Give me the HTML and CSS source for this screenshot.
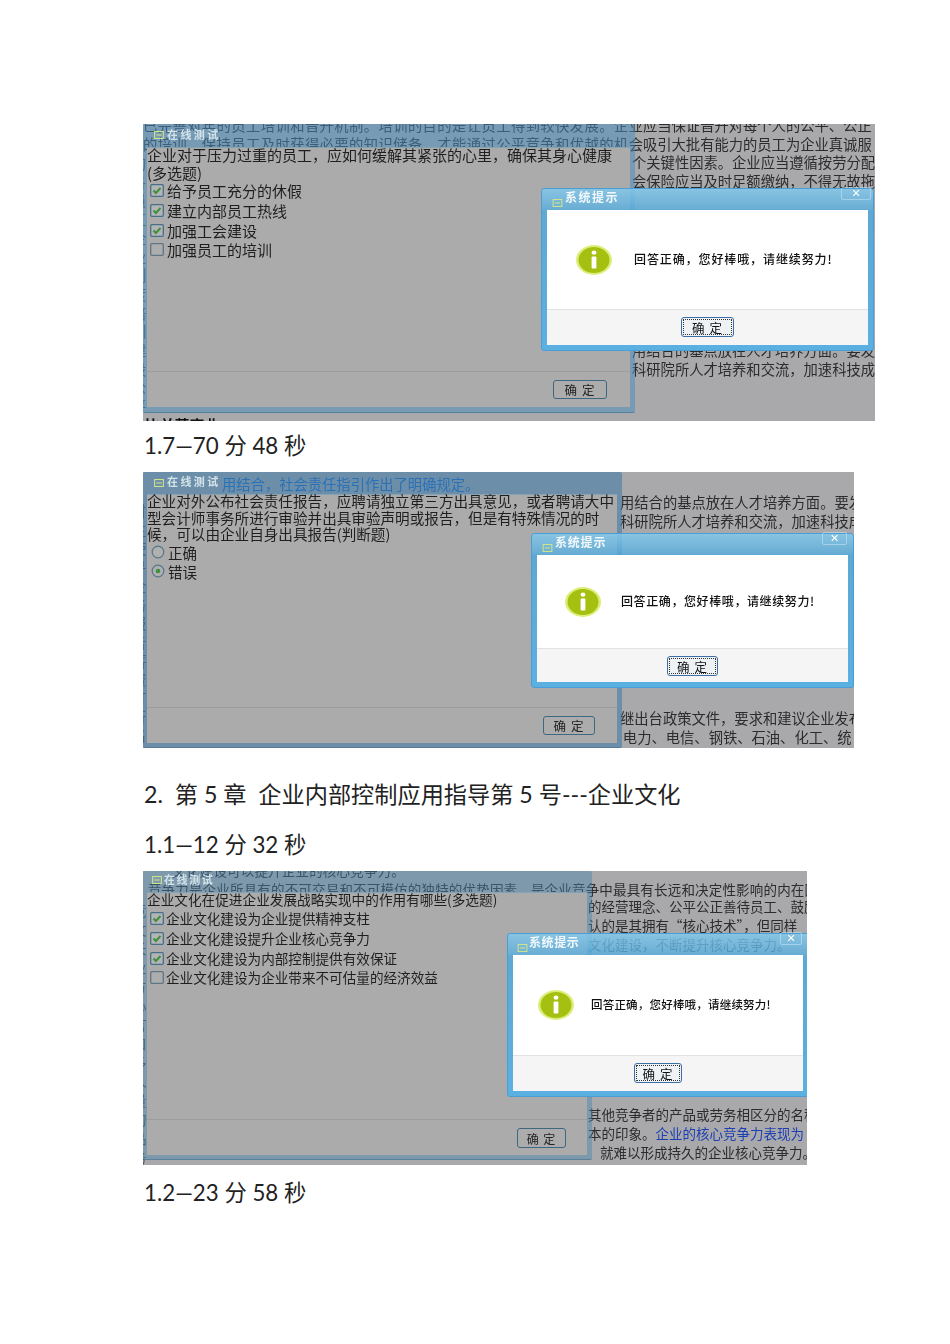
FILE: index.html
```html
<!DOCTYPE html>
<html lang="zh-CN">
<head>
<meta charset="utf-8">
<title>在线测试</title>
<link rel="stylesheet" href="styles.css">
</head>
<body>
<svg class="defs" aria-hidden="true">
  <symbol id="tbar" viewBox="0 0 11 9"><rect x=".6" y=".6" width="9.8" height="7.8" fill="none" stroke="currentColor" stroke-width="1.2"/><path d="M2.5 4.5h6" stroke="currentColor" stroke-width="1.2"/></symbol>
  <symbol id="info" viewBox="0 0 36 30"><ellipse cx="18" cy="15" rx="18" ry="15" fill="#dcee78"/><ellipse cx="18" cy="15" rx="15.5" ry="13" fill="#a6c012"/><ellipse cx="18" cy="7.6" rx="2.4" ry="2.2" fill="#fff"/><rect x="15.6" y="11.4" width="4.8" height="12" rx="1" fill="#fff"/></symbol>
  <symbol id="on" viewBox="0 0 14 13"><rect x=".7" y=".7" width="12.6" height="11.6" rx="1" fill="#b4b4b4" stroke="#47708a" stroke-width="1.3"/><path d="M3.5 6.5l2.4 2.5 4.6-5" fill="none" stroke="#3f8f3c" stroke-width="1.9"/></symbol>
  <symbol id="off" viewBox="0 0 14 13"><rect x=".7" y=".7" width="12.6" height="11.6" rx="1" fill="#adadad" stroke="#5f7686" stroke-width="1.3"/></symbol>
  <symbol id="r-off" viewBox="0 0 14 14"><circle cx="7" cy="7" r="5.8" fill="#b0b0b0" stroke="#54768c" stroke-width="1.2"/></symbol>
  <symbol id="r-on" viewBox="0 0 14 14"><circle cx="7" cy="7" r="5.8" fill="#b0b0b0" stroke="#54768c" stroke-width="1.2"/><circle cx="7" cy="7" r="2.3" fill="#3f8f3c"/></symbol>
</svg>

<main class="doc">
  <section class="shot shot1">
    <div class="back back-top"><span class="wide">已完善对年的员工培训和晋升机制。培训的目的是让员工得到较快发展。企</span>业应当保证晋升对每个人的公平、公正<br><span class="wide">的培训，保持员工及时获得必要的知识储备，才能通过公平竞争和优越的机</span>会吸引大批有能力的员工为企业真诚服</div>
    <div class="back back-r1">个关键性因素。企业应当遵循按劳分配<br>会保险应当及时足额缴纳，不得无故拖</div>
    <div class="back back-r2">用结合的基点放在人才培养方面。要发<br>科研院所人才培养和交流，加速科技成</div>
    <div class="back edge">的<br>各<br>员<br>工<br>企<br>业<br>制<br>度<br>培<br>训<br>建<br>设<br>公<br>平</div>
    <div class="cut">比并荐商业</div>
    <div class="window">
      <div class="win-title"><svg class="tbar-icon"><use href="#tbar"/></svg><span>在线测试</span></div>
      <div class="win-body">
        <div class="content">
          <p class="question">企业对于压力过重的员工，应如何缓解其紧张的心里，确保其身心健康<br>(多选题)</p>
          <ul class="options">
            <li><svg class="box"><use href="#on"/></svg>给予员工充分的休假</li>
            <li><svg class="box"><use href="#on"/></svg>建立内部员工热线</li>
            <li><svg class="box"><use href="#on"/></svg>加强工会建设</li>
            <li><svg class="box"><use href="#off"/></svg>加强员工的培训</li>
          </ul>
        </div>
        <div class="win-foot"><span class="win-btn">确 定</span></div>
      </div>
    </div>
    <div class="dialog">
      <div class="dlg-title"><svg class="tbar-icon"><use href="#tbar"/></svg><span>系统提示</span></div>
      <span class="close">✕</span>
      <div class="dlg-body">
        <div class="msg"><svg class="info"><use href="#info"/></svg><span>回答正确，您好棒哦，请继续努力!</span></div>
        <div class="dlg-foot"><span class="dlg-btn">确 定</span></div>
      </div>
    </div>
  </section>
  <p class="caption">1.7—70 分 48 秒</p>

  <section class="shot shot2">
    <div class="back back-top blue">用结合，社会责任指引作出了明确规定。</div>
    <div class="back back-r1">用结合的基点放在人才培养方面。要发<br>科研院所人才培养和交流，加速科技成</div>
    <div class="back back-r2">继出台政策文件，要求和建议企业发布<br>&thinsp;电力、电信、钢铁、石油、化工、统</div>
    <div class="back edge">财<br>主<br>使<br>寻<br>企<br>务<br>报<br>告<br>薪<br>资<br>订<br>行<br>名<br>出</div>
    <div class="window">
      <div class="win-title"><svg class="tbar-icon"><use href="#tbar"/></svg><span>在线测试</span></div>
      <div class="win-body">
        <div class="content">
          <p class="question">企业对外公布社会责任报告，应聘请独立第三方出具意见，或者聘请大中<br>型会计师事务所进行审验并出具审验声明或报告，但是有特殊情况的时<br>候，可以由企业自身出具报告(判断题)</p>
          <ul class="options">
            <li><svg class="box"><use href="#r-off"/></svg>正确</li>
            <li><svg class="box"><use href="#r-on"/></svg>错误</li>
          </ul>
        </div>
        <div class="win-foot"><span class="win-btn">确 定</span></div>
      </div>
    </div>
    <div class="dialog">
      <div class="dlg-title"><svg class="tbar-icon"><use href="#tbar"/></svg><span>系统提示</span></div>
      <span class="close">✕</span>
      <div class="dlg-body">
        <div class="msg"><svg class="info"><use href="#info"/></svg><span>回答正确，您好棒哦，请继续努力!</span></div>
        <div class="dlg-foot"><span class="dlg-btn">确 定</span></div>
      </div>
    </div>
  </section>
  <h2 class="chapter">2.&nbsp; 第 5 章&nbsp; 企业内部控制应用指导第 5 号---企业文化</h2>
  <p class="caption">1.1—12 分 32 秒</p>

  <section class="shot shot3">
    <div class="back back-top">&emsp;&emsp;文化建设可以提升企业的核心竞争力。<br>&thinsp;竞争力是企业所具有的不可交易和不可模仿的独特的优势因素，是企业竞争中最具有长远和决定性影响的内在因</div>
    <div class="back back-r1">的经营理念、公平公正善待员工、鼓励<br>认的是其拥有“核心技术”，但同样<br>文化建设，不断提升核心竞争力。</div>
    <div class="back back-r2">其他竞争者的产品或劳务相区分的名称<br>本的印象。<span class="blue-in">企业的核心竞争力表现为</span><br><span class="indent">就难以形成持久的企业核心竞争力。</span></div>
    <div class="back edge">竞<br>文<br>长<br>业<br>方<br>心<br>言<br>口<br>多<br>入<br>量<br>的<br>品<br>务</div>
    <div class="window">
      <div class="win-title"><svg class="tbar-icon"><use href="#tbar"/></svg><span>在线测试</span></div>
      <div class="win-body">
        <div class="content">
          <p class="question">企业文化在促进企业发展战略实现中的作用有哪些(多选题)</p>
          <ul class="options">
            <li><svg class="box"><use href="#on"/></svg>企业文化建设为企业提供精神支柱</li>
            <li><svg class="box"><use href="#on"/></svg>企业文化建设提升企业核心竞争力</li>
            <li><svg class="box"><use href="#on"/></svg>企业文化建设为内部控制提供有效保证</li>
            <li><svg class="box"><use href="#off"/></svg>企业文化建设为企业带来不可估量的经济效益</li>
          </ul>
        </div>
        <div class="win-foot"><span class="win-btn">确 定</span></div>
      </div>
    </div>
    <div class="dialog">
      <div class="dlg-title"><svg class="tbar-icon"><use href="#tbar"/></svg><span>系统提示</span></div>
      <span class="close">✕</span>
      <div class="dlg-body">
        <div class="msg"><svg class="info"><use href="#info"/></svg><span>回答正确，您好棒哦，请继续努力!</span></div>
        <div class="dlg-foot"><span class="dlg-btn">确 定</span></div>
      </div>
    </div>
  </section>
  <p class="caption cap-c">1.2—23 分 58 秒</p>
</main>
</body>
</html>
```
FILE: styles.css
```css
* { box-sizing: border-box; }
html, body { margin: 0; padding: 0; background: #fff; }
.defs { width: 0; height: 0; position: absolute; }
.doc {
  min-height: 1344px;
  padding: 124px 0 0 143px;
  font-family: "Lato", "Noto Sans CJK SC", sans-serif;
  color: #222;
  overflow: hidden;
}
.caption, .chapter {
  margin: 0;
  padding-left: 1px;
  font-size: 22.3px;
  font-weight: 400;
  white-space: nowrap;
  display: flex;
  align-items: center;
}
.caption { height: 51px; padding-bottom: 5px; }
.cap-c { height: 56px; }
.chapter { height: 72px; padding-top: 18px; font-size: 23.2px; }

/* screenshot canvases */
.shot {
  position: relative;
  overflow: hidden;
  background: #a9a9ab;
  font-family: "Noto Sans CJK SC", "Noto Sans", sans-serif;
  filter: blur(.45px);
}
.shot1 { width: 732px; height: 297px; }
.shot2 { width: 711px; height: 276px; }
.shot3 { width: 664px; height: 294px; }

.back {
  position: absolute;
  white-space: nowrap;
  color: #2c2c2e;
  font-size: 14.3px;
  line-height: 18.7px;
}
.wide { letter-spacing: .42px; }
.blue { color: #0f66cc; font-size: 14.3px; }
.blue-in { color: #1c3fb4; }
.indent { padding-left: 12px; }
.edge { left: -11px; top: 30px; color: #3a5468; }
.cut {
  position: absolute;
  left: 2px;
  top: 292px;
  font-size: 14.5px;
  font-weight: 700;
  color: #111;
  letter-spacing: .4px;
  line-height: 18px;
}
.shot1 .back-top { left: 0; top: -8px; }
.shot1 .back-r1 { left: 489px; top: 29px; }
.shot1 .back-r2 { left: 489px; top: 217px; }
.shot2 .back-top { left: 79px; top: 3px; }
.shot2 .back-r1 { left: 477px; top: 21px; }
.shot2 .back-r2 { left: 477px; top: 237px; }
.shot3 .back { font-size: 13.5px; line-height: 19px; }
.shot3 .back-top { left: 2px; top: -10px; letter-spacing: .18px; }
.shot3 .back-r1 { left: 445px; top: 26px; }
.shot3 .back-r2 { left: 445px; top: 234px; }
.shot3 .edge { left: -10px; }

/* test window */
.window {
  position: absolute;
  left: 0;
  top: 0;
  display: flex;
  flex-direction: column;
  padding: 0 5px 5px 4px;
  background: rgba(72, 142, 190, .52);
  border-bottom: 1px solid rgba(60, 110, 140, .55);
  border-radius: 2px;
}
.shot1 .window { width: 492px; height: 289px; }
.shot2 .window { width: 479px; height: 276px; padding-bottom: 4px; background: rgba(62, 122, 165, .56); }
.shot3 .window { width: 449px; height: 289px; padding-bottom: 4px; background: rgba(72, 132, 170, .45); }
.win-title {
  display: flex;
  align-items: center;
  gap: 3px;
  padding-left: 7px;
  color: #d3e3ea;
  font-size: 11px;
  font-weight: 700;
  letter-spacing: 2.4px;
}
.shot1 .win-title { height: 23px; }
.shot2 .win-title { height: 22px; }
.shot3 .win-title { height: 21px; letter-spacing: 1.6px; padding-bottom: 6px; padding-left: 5px; gap: 2px; }
.shot1 .win-title, .shot2 .win-title { padding-bottom: 4px; }
.tbar-icon { width: 10px; height: 8px; color: #cfe28c; margin-top: 3px; flex: none; }
.win-body {
  flex: 1;
  display: flex;
  flex-direction: column;
  background: #ababab;
  border-top: 1px solid #86a3b5;
  min-height: 0;
}
.content { flex: 1; min-height: 0; color: #1f1f1f; }
.question {
  margin: -2px 0 0;
  font-size: 15px;
  line-height: 18px;
  white-space: nowrap;
}
.shot2 .question { font-size: 14.6px; line-height: 16.6px; }
.shot3 .question { font-size: 13.65px; line-height: 18px; margin-top: -3px; }
.options { list-style: none; margin: -1px 0 0; padding: 0 0 0 3px; font-size: 15px; }
.options li {
  display: flex;
  align-items: center;
  gap: 3px;
  height: 19.7px;
  line-height: 19px;
  white-space: nowrap;
}
.shot2 .options { font-size: 14.5px; padding-left: 4px; margin-top: 0; }
.shot2 .options li { height: 19px; gap: 3px; }
.shot3 .options { font-size: 13.6px; margin-top: 1px; }
.shot3 .options li { gap: 2px; }
.box { width: 14px; height: 13px; flex: none; }
.shot2 .box { height: 14px; }
.win-foot {
  display: flex;
  justify-content: flex-end;
  align-items: flex-start;
  border-top: 1px solid #9c9c9c;
  height: 36px;
  padding: 8px 23px 0 0;
}
.shot2 .win-foot { padding-right: 22px; }
.shot3 .win-foot { padding-right: 21px; }
.win-btn {
  width: 54px;
  height: 19px;
  display: flex;
  align-items: center;
  justify-content: center;
  border: 1.5px solid #3f6880;
  border-radius: 3px;
  background: #acacac;
  color: #222;
  font-size: 12.5px;
  letter-spacing: 1px;
}
.shot2 .win-btn { width: 52px; }
.shot3 .win-btn { width: 49px; height: 20px; font-size: 12px; }

/* prompt dialog */
.dialog {
  position: absolute;
  display: flex;
  flex-direction: column;
  padding: 0 5px 5px 5px;
  background: linear-gradient(rgba(130, 200, 236, .85), rgba(86, 176, 226, .75) 12%, rgba(74, 168, 222, .8) 14%, #5bb0e2 100%);
  border: 1px solid #4a9ed4;
  border-radius: 3px;
}
.shot1 .dialog { left: 398px; top: 64px; width: 333px; height: 163px; }
.shot2 .dialog { left: 388px; top: 61px; width: 323px; height: 155px; }
.shot3 .dialog { left: 364px; top: 62px; width: 302px; height: 164px; }
.dlg-title {
  height: 21px;
  flex: none;
  display: flex;
  align-items: center;
  gap: 2px;
  padding: 0 0 6px 5px;
  color: #f1f8fb;
  font-size: 12px;
  font-weight: 700;
}
.dlg-title .tbar-icon { margin-top: 13px; width: 11px; }
.shot1 .dlg-title span { letter-spacing: 1.5px; }
.shot2 .dlg-title span { letter-spacing: .8px; }
.shot3 .dlg-title span { letter-spacing: .6px; }
.shot3 .dlg-title { padding-left: 4px; gap: 1px; }
.close {
  position: absolute;
  right: 2px;
  top: -2px;
  width: 30px;
  height: 13px;
  display: flex;
  align-items: center;
  justify-content: center;
  border: 1px solid rgba(200, 232, 248, .55);
  border-radius: 2px;
  color: #fff;
  font-size: 11px;
  font-weight: 700;
  line-height: 1;
  font-family: "DejaVu Sans", sans-serif;
}
.shot2 .close { width: 25px; right: 6px; }
.shot3 .close { width: 22px; right: 6px; }
.dlg-body {
  flex: 1;
  display: flex;
  flex-direction: column;
  background: #fff;
  min-height: 0;
}
.msg {
  flex: 1;
  display: flex;
  align-items: center;
  gap: 22px;
  padding-left: 29px;
  color: #111;
  font-size: 12px;
  font-weight: 500;
  letter-spacing: .9px;
  white-space: nowrap;
}
.msg span { margin-top: -2px; }
.info { width: 36px; height: 30px; flex: none; }
.shot2 .msg { padding-left: 28px; gap: 20px; letter-spacing: .6px; }
.shot3 .msg { padding-left: 25px; gap: 17px; font-size: 11.5px; letter-spacing: .2px; }
.dlg-foot {
  height: 36px;
  flex: none;
  display: flex;
  justify-content: center;
  align-items: flex-start;
  padding-top: 7px;
  border-top: 1px solid #e2e2e2;
  background: #f5f5f5;
}
.shot2 .dlg-foot { height: 34px; }
.dlg-btn {
  width: 53px;
  height: 20px;
  display: flex;
  align-items: center;
  justify-content: center;
  border: 1.5px solid #3c6fa6;
  border-radius: 3px;
  background: #eef2f5;
  outline: 1px dotted #333;
  outline-offset: -3px;
  color: #111;
  font-size: 12.5px;
  letter-spacing: 1px;
}
.shot2 .dlg-btn { width: 51px; }
.shot3 .dlg-btn { width: 48px; }
```
